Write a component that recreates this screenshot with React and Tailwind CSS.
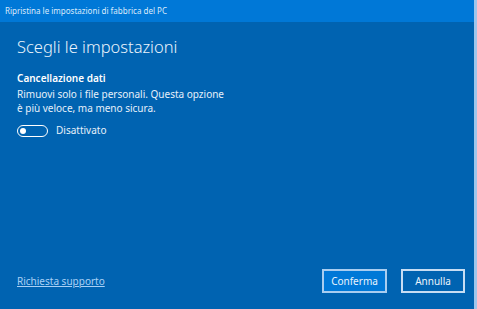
import React, { useState } from 'react';

export default function App() {
  const [on, setOn] = useState(false);
  return (
    <div className="w-[477px] h-[309px] flex flex-col bg-[#0063b1] text-white border-r-[3px] border-[#9fc6ec] overflow-hidden" style={{ fontFamily: '"Noto Sans", "Open Sans", sans-serif' }}>
      {/* title bar */}
      <div className="h-[22px] shrink-0 bg-[#0078d7] flex items-center px-[5px] text-[8px] text-[#dbeafb]">
        Ripristina le impostazioni di fabbrica del PC
      </div>

      <div className="flex-1 flex flex-col pl-[17px] pr-[9px] pt-[13px] pb-[16px]">
        <h1 className="text-[16.5px] font-light leading-[24px] text-[#eaf3fc]">Scegli le impostazioni</h1>

        <div className="mt-[12px] text-[10px] font-semibold leading-[14px]">Cancellazione dati</div>
        <p className="mt-[2px] text-[10px] leading-[14px] text-[#e6f0fa] w-[212px]">
          Rimuovi solo i file personali. Questa opzione è più veloce, ma meno sicura.
        </p>

        <div className="mt-[8px] flex items-center gap-[8px]">
          <button
            onClick={() => setOn(!on)}
            className="w-[31px] h-[12px] rounded-full border-[1.5px] border-white flex items-center px-[2px]"
          >
            <span className="w-[6px] h-[6px] rounded-full bg-white" />
          </button>
          <span className="text-[10px] text-[#e6f0fa]">{on ? 'Attivato' : 'Disattivato'}</span>
        </div>

        <div className="flex-1" />

        <div className="flex items-end justify-between">
          <a href="#" className="text-[10px] underline text-[#a9d0f5] mb-[4px]">Richiesta supporto</a>
          <div className="flex gap-[14px]">
            <button className="w-[65px] h-[24px] bg-[#0078d7] border-2 border-[#a9cdf0] text-[10px] text-[#eaf3fc]">Conferma</button>
            <button className="w-[64px] h-[24px] border-2 border-[#c7ddf3] text-[10px] text-[#eaf3fc]">Annulla</button>
          </div>
        </div>
      </div>
    </div>
  );
}
